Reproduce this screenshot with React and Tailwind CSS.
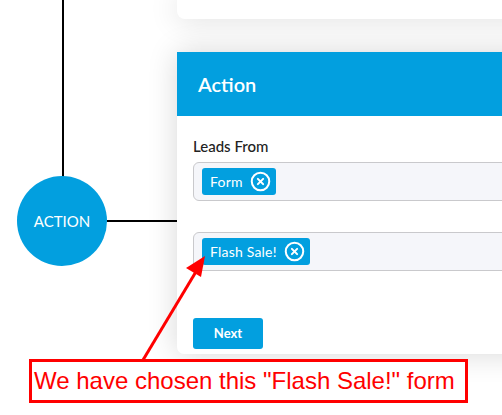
import { CircleX } from "lucide-react";

const Tag = ({ label }) => (
  <span className="inline-flex items-center gap-[7px] h-[27px] pl-2 pr-[5px] rounded-[3px] bg-[#029fdf] text-white text-[14px] tracking-[0.2px]">
    {label}
    <CircleX size={21} strokeWidth={2.3} />
  </span>
);

const TagInput = ({ label, className = "" }) => (
  <div className={`h-[39px] flex items-center pl-2 border border-[#c9c9cc] rounded-l-[6px] bg-[#f5f6fa] ${className}`}>
    <Tag label={label} />
  </div>
);

export default function App() {
  return (
    <div className="relative w-[502px] h-[415px] overflow-hidden bg-white flex font-['Lato','Noto_Sans',sans-serif]">
      {/* flow diagram canvas */}
      <div className="relative w-[177px] shrink-0">
        <div className="absolute left-[62px] top-0 w-[2px] h-[177px] bg-black" />
        <div className="absolute left-[107px] top-[220px] w-[70px] h-[2px] bg-black" />
        <div className="absolute left-[17px] top-[176px] w-[90px] h-[90px] rounded-full bg-[#029fdf] flex items-center justify-center text-white text-[15px]">
          ACTION
        </div>
      </div>

      {/* side panel */}
      <div className="w-[420px] shrink-0 flex flex-col">
        <div className="h-[19px] bg-white rounded-bl-[8px] shadow-[0_0_30px_rgba(0,0,0,0.16)]" />
        <div className="mt-[33px] bg-white rounded-bl-[7px] shadow-[0_0_30px_rgba(0,0,0,0.16)]">
          <div className="h-[64px] bg-[#029fdf] flex items-center px-[21px]">
            <h2 className="text-white text-[20px] font-semibold">Action</h2>
          </div>
          <div className="pl-4 pt-5 pb-[5px]">
            <div className="text-[15px] leading-5 font-medium text-[#222] mb-[6px]">Leads From</div>
            <TagInput label="Form" />
            <TagInput label="Flash Sale!" className="mt-[31px]" />
            <button className="mt-[47px] w-[70px] h-[31px] rounded-[3px] bg-[#029fdf] text-white text-[13px] font-bold">
              Next
            </button>
          </div>
        </div>
      </div>

      {/* annotation */}
      <svg className="absolute left-0 top-0 pointer-events-none" width="502" height="415">
        <line x1="143" y1="360" x2="197" y2="270" stroke="#ff0000" strokeWidth="3" />
        <polygon points="205,256 186,268 201,277" fill="#ff0000" />
      </svg>
      <div className="absolute left-[29px] top-[359px] w-[439px] h-[44px] border-[3px] border-[#ff0000] bg-white pl-[2px] flex items-center">
        <span className="text-[24px] leading-none text-[#ff0000] font-['Liberation_Sans',Arial,sans-serif]">
          We have chosen this "Flash Sale!" form
        </span>
      </div>
    </div>
  );
}
